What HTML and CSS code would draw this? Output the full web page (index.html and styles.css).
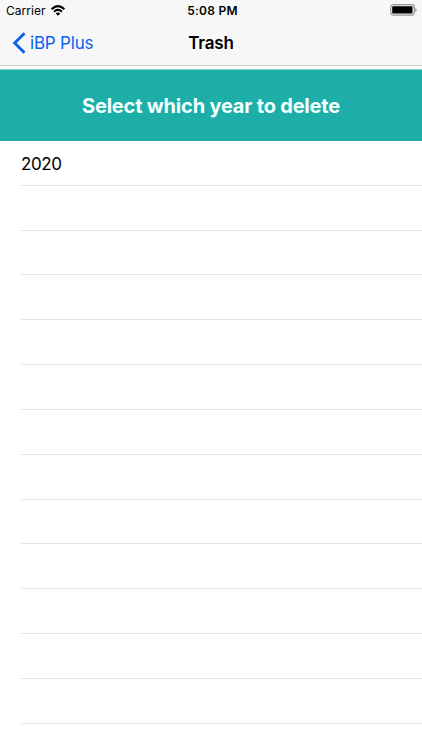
FILE: index.html
```html
<!DOCTYPE html>
<html lang="en">
<head>
<meta charset="utf-8">
<meta name="viewport" content="width=device-width, initial-scale=1">
<title>Trash</title>
<link rel="stylesheet" href="styles.css">
</head>
<body>
<header class="top">
  <div class="status">
    <div class="carrier"><span>Carrier</span>
      <svg class="wifi" width="14" height="11" viewBox="0 0 14 11" fill="none" stroke="#000" stroke-width="2.1"><path d="M.6 4.1Q7-1.7 13.4 4.1M3 6.7Q7 3.2 11 6.7"/><path d="M7 10.8 4.7 8.5Q7 6.7 9.3 8.5Z" fill="#000" stroke="none"/></svg>
    </div>
    <time class="time">5:08 PM</time>
    <svg class="battery" width="27" height="12" viewBox="0 0 27 12"><rect x=".7" y=".7" width="23.6" height="10.4" rx="2.5" fill="#eee" stroke="#999" stroke-width="1.2"/><rect x="2.2" y="2.2" width="20.3" height="7.3" rx=".8"/><path d="M25.2 4v4q1.5-.6 1.5-2t-1.5-2" fill="#999"/></svg>
  </div>
  <nav class="nav">
    <a class="back"><svg width="14" height="22" viewBox="0 0 14 22" fill="none" stroke="#0b62ed" stroke-width="2.9"><path d="M12.5 1.2 2.7 11l9.8 9.8"/></svg><span>iBP Plus</span></a>
    <h1 class="title">Trash</h1>
    <span></span>
  </nav>
</header>
<h2 class="banner">Select which year to delete</h2>
<ul class="years">
  <li><span>2020</span></li><li></li><li></li><li></li><li></li><li></li><li></li><li></li><li></li><li></li><li></li><li></li><li></li>
</ul>
</body>
</html>
```
FILE: styles.css
```css
* { box-sizing: border-box; }
body {
  margin: 0;
  height: 750px;
  overflow: hidden;
  background: #fff;
  color: #000;
  font-family: Inter, "Liberation Sans", sans-serif;
}
.top {
  height: 66px;
  background: #f7f7f7;
  border-bottom: 1px solid #cfcfcf;
}
.status, .nav {
  display: grid;
  grid-template-columns: 1fr auto 1fr;
  align-items: center;
}
.status {
  height: 22px;
  padding: 0 5px 0 6px;
  font-size: 12px;
  line-height: 22px;
}
.carrier {
  display: flex;
  align-items: center;
  gap: 5px;
  letter-spacing: 0.05px;
}
.wifi { margin-top: -1px; }
.time {
  padding-left: 2px;
  font-weight: 600;
  letter-spacing: 0.25px;
}
.battery {
  justify-self: end;
  margin-top: -2px;
}
.nav {
  height: 42px;
  padding: 0 12px;
}
.back {
  display: flex;
  align-items: center;
  gap: 4px;
  color: #0b62ed;
  font-size: 17px;
  letter-spacing: -0.2px;
}
.title {
  margin: 0;
  font-size: 17px;
  font-weight: 600;
  letter-spacing: -0.2px;
}
.banner {
  height: 72px;
  margin: 3px 0 0;
  border-top: 1px solid #8ed7d3;
  background: #1caea7;
  color: #f4ffff;
  font-size: 20px;
  font-weight: 700;
  line-height: 72px;
  letter-spacing: -0.2px;
  text-align: center;
}
.years {
  margin: 0;
  padding: 0 0 0 21px;
  list-style: none;
}
.years li {
  display: flex;
  align-items: center;
  height: 44.83px;
  padding-top: 3px;
  border-bottom: 1px solid #e3e3e3;
  font-size: 17px;
  letter-spacing: -0.4px;
}
```
